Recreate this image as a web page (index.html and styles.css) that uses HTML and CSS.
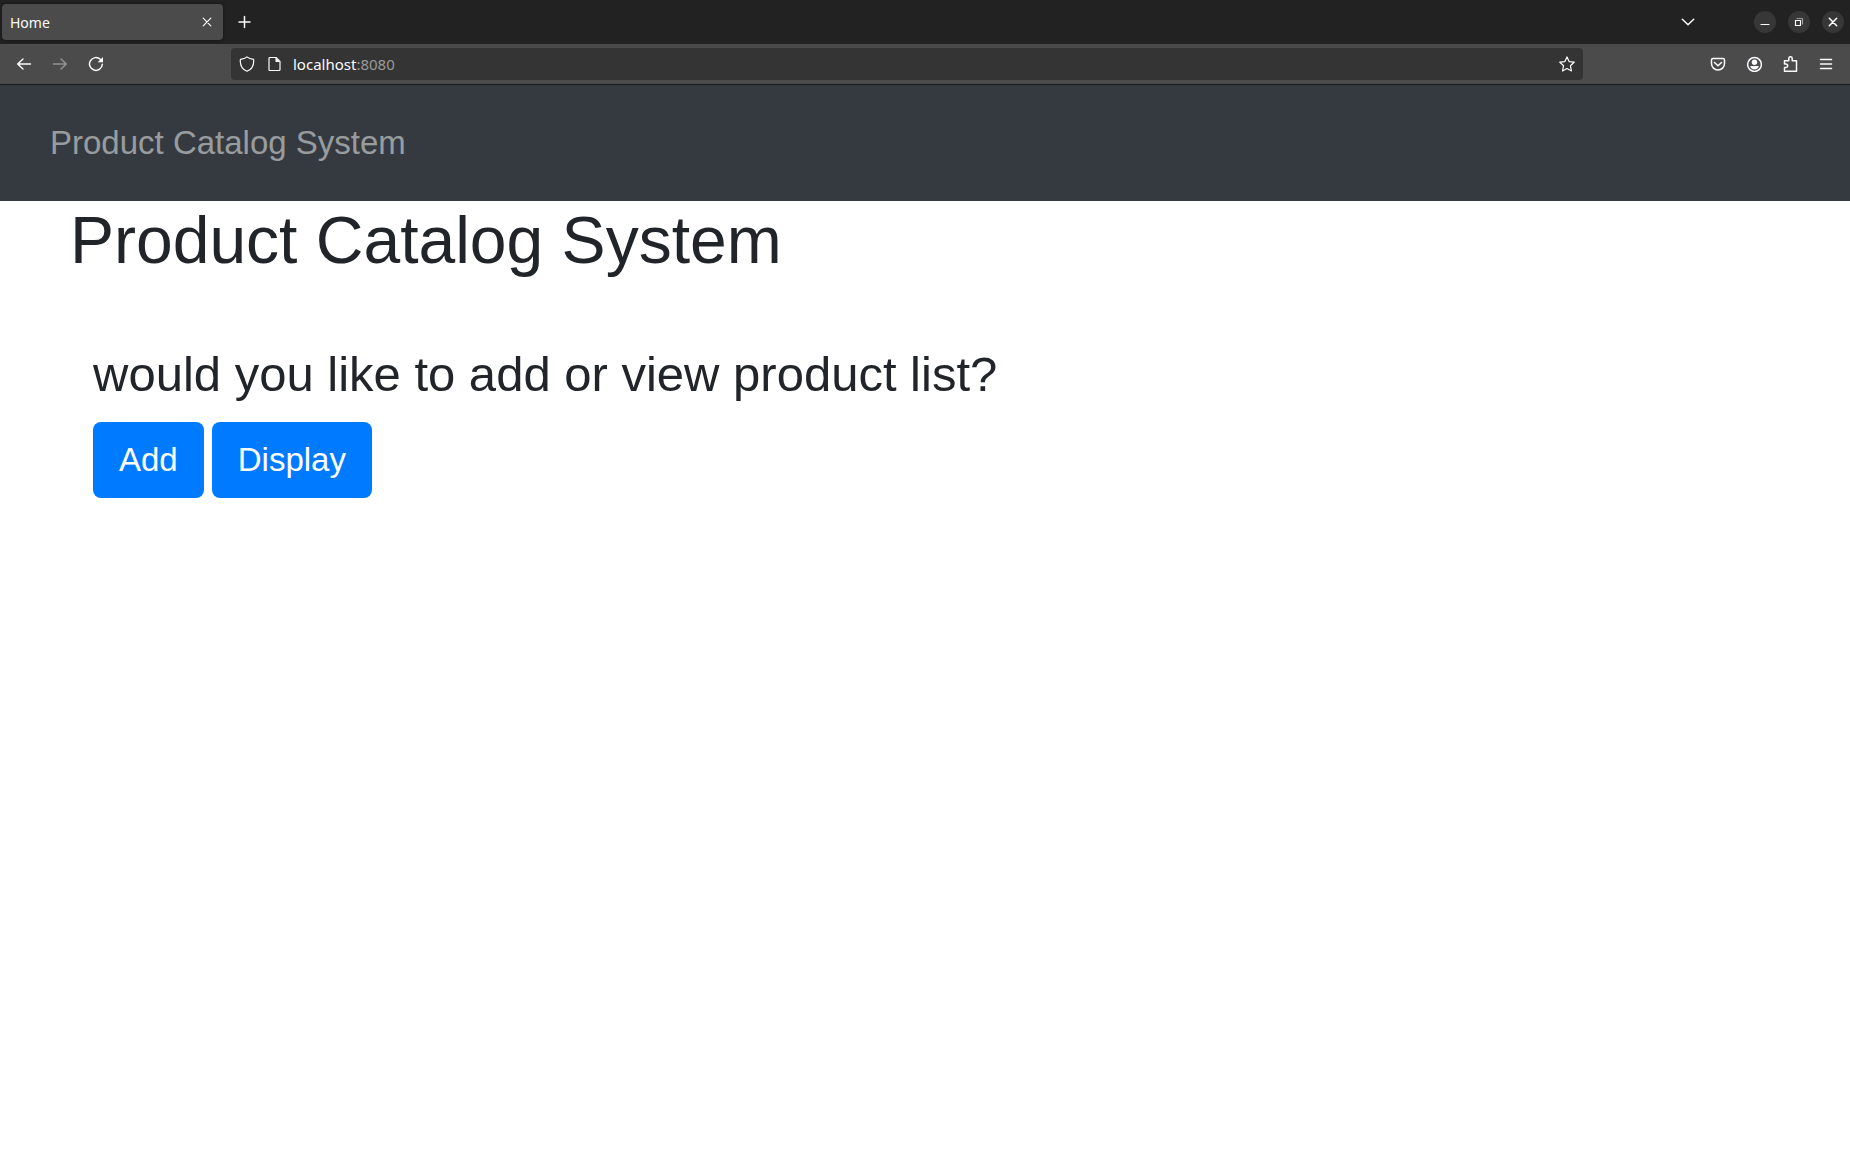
FILE: index.html
```html
<!DOCTYPE html>
<html lang="en">
<head>
<meta charset="utf-8">
<title>Home</title>
<link rel="stylesheet" href="styles.css">
</head>
<body>
<header class="browser">
  <div class="titlebar">
    <div class="tab">
      <span class="tab-title">Home</span>
      <button class="icon-btn tab-close" aria-label="Close tab"><svg width="16" height="16" viewBox="0 0 16 16"><path d="M4.200 4.200l7.600 7.600M11.800 4.200l-7.600 7.600"/></svg></button>
    </div>
    <button class="icon-btn new-tab" aria-label="New tab"><svg class="bold" width="16" height="16" viewBox="0 0 16 16"><path d="M7.500 2.500v11M2 8h11"/></svg></button>
    <button class="icon-btn list-tabs" aria-label="List all tabs"><svg class="bold" width="16" height="16" viewBox="0 0 16 16"><path d="M2.300 5.200L8 10.800l5.700-5.600"/></svg></button>
    <div class="window-buttons">
      <button class="window-btn" aria-label="Minimize"><svg width="16" height="16" viewBox="0 0 16 16"><path d="M4 10.500h8"/></svg></button>
      <button class="window-btn" aria-label="Restore"><svg width="16" height="16" viewBox="0 0 16 16"><path d="M4.500 6.500h5v5h-5z"/><path class="faint" d="M6 4.500h5.500V10"/></svg></button>
      <button class="window-btn" aria-label="Close"><svg class="bold" width="16" height="16" viewBox="0 0 16 16"><path d="M4.300 4.300l7.400 7.400M11.700 4.300l-7.400 7.400"/></svg></button>
    </div>
  </div>
  <div class="toolbar">
    <button class="icon-btn" aria-label="Back"><svg class="bold" width="16" height="16" viewBox="0 0 16 16"><path d="M14.500 8H1.700M7 3L1.700 8 7 13"/></svg></button>
    <button class="icon-btn" aria-label="Forward" disabled><svg class="bold" width="16" height="16" viewBox="0 0 16 16"><path d="M1.500 8h12.800M9 3l5.300 5L9 13"/></svg></button>
    <button class="icon-btn" aria-label="Reload"><svg class="bold" width="16" height="16" viewBox="0 0 16 16"><path d="M14.300 8.300A6.400 6.400 0 1 1 12.300 3.300"/><path class="solid" d="M15 1v5.300H9.700z"/></svg></button>
    <div class="urlbar">
      <button class="icon-btn url-btn" aria-label="Tracking protection"><svg width="16" height="16" viewBox="0 0 16 16"><path d="M8 .9C6.500 2.200 4 3 1.400 3.300c-.5 4.900.8 9.600 6.600 12 5.800-2.400 7.100-7.100 6.600-12C12 3 9.500 2.200 8 .9z"/></svg></button>
      <button class="icon-btn url-btn" aria-label="Site information"><svg width="16" height="16" viewBox="0 0 16 16"><path d="M3 1.500h6l4 4v8q0 1-1 1H3q-1 0-1-1v-11q0-1 1-1z"/><path class="solid" d="M8.500 1.500v4.500H13z"/></svg></button>
      <div class="address"><span class="host">localhost</span>:8080</div>
      <button class="icon-btn url-btn" aria-label="Bookmark this page"><svg width="16" height="16" viewBox="0 0 16 16"><path d="M8 .9l2.100 4.700 5.100.6-3.800 3.500 1.100 5.300L8 12.500 3.500 15l1.100-5.300L.8 6.200l5.100-.6z"/></svg></button>
    </div>
    <button class="icon-btn" aria-label="Save to Pocket"><svg class="bold" width="16" height="16" viewBox="0 0 16 16"><path d="M3 2.500h10q1.500 0 1.500 1.500v3.500a6.500 6.500 0 0 1-13 0V4q0-1.500 1.500-1.500zM4.500 6.500L8 9.800l3.500-3.300"/></svg></button>
    <button class="icon-btn" aria-label="Account"><svg class="bold" width="16" height="16" viewBox="0 0 16 16"><circle cx="8.500" cy="8.500" r="6.900"/><circle class="solid" cx="8.500" cy="6.300" r="2.700"/><path class="solid" d="M4.200 10h8.600c-.4 2.300-2 3.500-4.300 3.500s-3.900-1.200-4.300-3.500z"/></svg></button>
    <button class="icon-btn" aria-label="Extensions"><svg class="bold" width="16" height="16" viewBox="0 0 16 16"><path d="M2.500 15.200v-3.700H4a1.700 1.700 0 0 0 0-3.400H2.500V4.800h4.300V2.500a1.700 1.700 0 0 1 3.400 0v2.300h4.300v10.400z"/></svg></button>
    <button class="icon-btn" aria-label="Application menu"><svg class="bold" width="16" height="16" viewBox="0 0 16 16"><path d="M2.500 3.500h11M2.500 8h11M2.500 12.500h11"/></svg></button>
  </div>
</header>
<nav class="navbar"><a class="nav-link" href="#">Product Catalog System</a></nav>
<main class="container">
  <h1>Product Catalog System</h1>
  <section class="prompt">
    <h2>would you like to add or view product list?</h2>
    <div class="actions">
      <button class="btn">Add</button>
      <button class="btn">Display</button>
    </div>
  </section>
</main>
</body>
</html>
```
FILE: styles.css
```css
* { box-sizing: border-box; }

body {
  margin: 0;
  background: #fff;
  color: #212529;
  font-family: "Liberation Sans", Arial, sans-serif;
}

button { font-family: inherit; border: 0; padding: 0; }

svg { fill: none; stroke: currentColor; stroke-width: 1.2; stroke-linejoin: round; stroke-linecap: round; }
.bold { stroke-width: 1.5; }
.solid { fill: currentColor; stroke: none; }
.faint { opacity: 0.5; }

/* Browser window */
.browser {
  color: #fbfbfe;
  font: 14px/20px "Noto Sans", "Open Sans", sans-serif;
  border-bottom: 1px solid #1c1c1e;
}

.titlebar {
  display: flex;
  align-items: center;
  height: 44px;
  padding: 0 6px 0 2px;
  background: #222;
}

.tab {
  display: flex;
  align-items: center;
  justify-content: space-between;
  width: 221px;
  height: 36px;
  padding: 0 4px 0 8px;
  border-radius: 4px;
  background: #4b4b4b;
  box-shadow: 0 0 3px #111;
}

.tab-title { padding-top: 2px; }

.icon-btn {
  display: flex;
  align-items: center;
  justify-content: center;
  width: 36px;
  height: 32px;
  background: transparent;
  color: inherit;
}
.icon-btn:disabled { opacity: 0.4; }

.tab-close { width: 24px; height: 24px; }
.new-tab { margin-left: 4px; }
.list-tabs { margin-left: auto; }

.window-buttons { display: flex; gap: 12px; margin-left: 48px; }

.window-btn {
  display: flex;
  align-items: center;
  justify-content: center;
  width: 22px;
  height: 22px;
  border-radius: 50%;
  background: #373737;
  color: #fff;
}

.toolbar {
  display: flex;
  align-items: center;
  height: 40px;
  padding: 0 6px;
  background: #4b4b4b;
}

.urlbar {
  display: flex;
  flex: 1;
  align-items: center;
  height: 32px;
  margin: 0 117px;
  padding: 0 2px;
  border-radius: 4px;
  background: #343434;
}

.url-btn { width: 28px; }
.address { flex: 1; padding-left: 4px; color: #9a9a9a; font-size: 15px; }
.host { color: #fbfbfe; }

/* Page */
.navbar {
  display: flex;
  align-items: center;
  padding: 33px 50px;
  background: #343a40;
}

.nav-link {
  color: rgba(255, 255, 255, 0.5);
  font-size: 33px;
  line-height: 50px;
  text-decoration: none;
}

.container { padding: 0 70px; }

h1, h2 { margin: 0; font-weight: 500; }
h1 { font-size: 66px; line-height: 78px; }
h2 { font-size: 49px; line-height: 58px; }

.prompt { padding: 66px 23px; }

.actions { display: flex; gap: 8px; margin-top: 19px; }

.btn {
  padding: 13px 26px;
  border-radius: 8px;
  background: #007bff;
  color: #fff;
  font-size: 33px;
  line-height: 50px;
}
```
